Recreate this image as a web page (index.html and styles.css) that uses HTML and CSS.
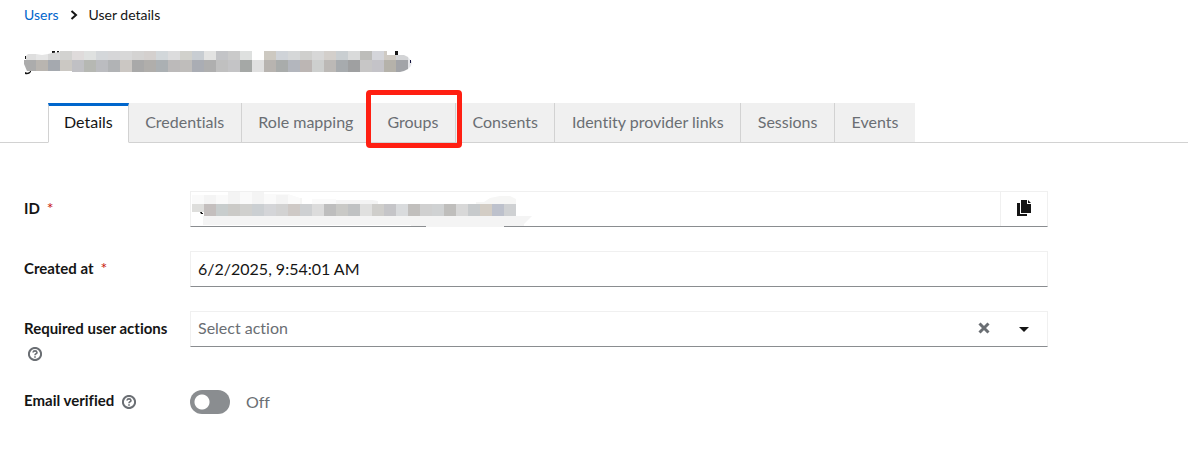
FILE: index.html
```html
<!DOCTYPE html>
<html lang="en">
<head>
<meta charset="utf-8">
<meta name="viewport" content="width=device-width, initial-scale=1">
<title>User details</title>
<link rel="stylesheet" href="styles.css">
</head>
<body>
<header class="page-header">
  <nav class="breadcrumb" aria-label="Breadcrumb">
    <a class="breadcrumb-link" href="#users">Users</a>
    <svg class="breadcrumb-chevron" viewBox="0 0 8 10" aria-hidden="true"><path d="M1.5 1 6 5 1.5 9"/></svg>
    <span>User details</span>
  </nav>
  <svg class="masked-title" viewBox="0 0 392 26" role="img" aria-label="Hidden user name">
    <path fill="#151515" d="M1 6h2v3H1zM1 22q4 2 6-2v2q-2 3-6 2zM28 1h3v3h-3zM33 1h2v3h-2zM371 1h3v6h-3z"/>
    <path fill="#dedede" d="M2 6l2-2h8v6H2z"/><path fill="#e5e5e5" d="M12 4l6 1 6-1v6H12z"/>
    <path fill="#d8d8d8" d="M24 4l4-1 8-1v8H24z"/>
    <path fill="#d2d2d0" d="M36 1h12v9H36z"/><path fill="#dfdbdb" d="M48 1h12v9H48z"/><path fill="#dfe1e0" d="M60 1h12v9H60z"/>
    <path fill="#d4d7da" d="M72 1h12v9H72z"/><path fill="#d6d6d8" d="M84 1h12v9H84z"/><path fill="#d8d8d8" d="M96 1h12v9H96z"/>
    <path fill="#d4d3d2" d="M108 1h12v9h-12z"/><path fill="#d4d0ce" d="M120 1h12v9h-12z"/><path fill="#d2d7da" d="M132 1h12v9h-12z"/>
    <path fill="#dcdcdd" d="M144 1h12v9h-12z"/><path fill="#d1d1cc" d="M156 1h12v9h-12z"/><path fill="#c8cdd2" d="M168 1h12v9h-12z"/>
    <path fill="#e3e3e2" d="M180 1h12v9h-12z"/><path fill="#c3c4c7" d="M192 1h12v9h-12z"/><path fill="#cacaca" d="M204 1h12v9h-12z"/>
    <path fill="#dee0df" d="M216 1h12v9h-12z"/><path fill="#cdc9c1" d="M240 1h12v9h-12z"/><path fill="#cfd3d8" d="M252 1h12v9h-12z"/>
    <path fill="#d5d7d8" d="M264 1h12v9h-12z"/><path fill="#cfcfcd" d="M276 1h12v9h-12z"/><path fill="#d7d7d7" d="M288 1h12v9h-12z"/>
    <path fill="#d3cfcb" d="M300 1h12v9h-12z"/><path fill="#c9ced1" d="M312 1h12v9h-12z"/><path fill="#d9dada" d="M324 1h12v9h-12z"/>
    <path fill="#bdbdba" d="M336 1h12v9h-12z"/><path fill="#d4d5da" d="M348 1h12v9h-12z"/><path fill="#cfcac3" d="M360 1h3v4h9v5h-12z"/>
    <path fill="#d3d4d6" d="M372 5h8l4 2v3h-12z"/>
    <path fill="#acacac" d="M0 10h12v11H3L0 14z"/><path fill="#b9b5b0" d="M12 10h12v11H12z"/><path fill="#a5a9af" d="M24 10h12v11H24z"/>
    <path fill="#cbc8c3" d="M36 10h12v11H36z"/><path fill="#c0c0c4" d="M48 10h12v12H48z"/><path fill="#b6b8b3" d="M60 10h12v12H60z"/>
    <path fill="#bbbcc0" d="M72 10h12v12H72z"/><path fill="#b1b3b5" d="M84 10h12v12H84z"/><path fill="#cbc7c3" d="M96 10h12v12H96z"/>
    <path fill="#a9a9a9" d="M108 10h12v12h-12z"/><path fill="#b0aeab" d="M120 10h12v12h-12z"/><path fill="#abb0b3" d="M132 10h12v12h-12z"/>
    <path fill="#bcbaba" d="M144 10h12v12h-12z"/><path fill="#bfbdbb" d="M156 10h12v12h-12z"/><path fill="#aaadb4" d="M168 10h12v12h-12z"/>
    <path fill="#afafaf" d="M180 10h12v12h-12z"/><path fill="#c0c0c0" d="M192 10h12v12h-12z"/><path fill="#c4c4c6" d="M204 10h12v12h-12z"/>
    <path fill="#a5a8a6" d="M216 10h12v12h-12z"/><path fill="#e0e0e0" d="M228 10h12v12h-12z"/><path fill="#b8b4b0" d="M240 10h12v12h-12z"/>
    <path fill="#a9acab" d="M252 10h12v12h-12z"/><path fill="#b3b6bd" d="M264 10h12v12h-12z"/><path fill="#bcb6b4" d="M276 10h12v12h-12z"/>
    <path fill="#cdcfce" d="M288 10h12v12h-12z"/><path fill="#bcb9b6" d="M300 10h12v12h-12z"/><path fill="#a7abae" d="M312 10h12v12h-12z"/>
    <path fill="#9fa0a1" d="M324 10h12v12h-12z"/><path fill="#c7c6c6" d="M336 10h12v12h-12z"/><path fill="#c4c3c8" d="M348 10h12v12h-12z"/>
    <path fill="#b5b2aa" d="M360 10h12v12h-12z"/><path fill="#a2a4a8" d="M372 10h12v9l-4 2-4 1h-4z"/><path fill="#e5e6e9" d="M384 7l4 5-1 4-3 3z"/>
    <path fill="#151540" d="M386 10h1v3h-1z"/>
  </svg>
</header>
<nav class="tabs">
  <div class="tab-list" role="tablist" aria-label="User sections">
    <button class="tab tab-current" type="button" role="tab" aria-selected="true">Details</button>
    <button class="tab" type="button" role="tab">Credentials</button>
    <button class="tab" type="button" role="tab">Role mapping</button>
    <button class="tab tab-marked" type="button" role="tab">Groups</button>
    <button class="tab" type="button" role="tab">Consents</button>
    <button class="tab" type="button" role="tab">Identity provider links</button>
    <button class="tab" type="button" role="tab">Sessions</button>
    <button class="tab" type="button" role="tab">Events</button>
  </div>
</nav>
<form class="form">
  <div class="form-row">
    <div class="form-label"><label for="user-id">ID</label><span class="required">*</span></div>
    <div class="field">
      <input class="control" id="user-id" type="text" readonly>
      <button class="copy-button" type="button" aria-label="Copy ID">
        <svg class="icon-copy" viewBox="0 0 14 16" aria-hidden="true"><path fill="#151515" d="M0 3h3v11h7v2H0zM4 0h6v4h4v9H4zM11 0l3 3h-3z"/></svg>
      </button>
      <svg class="masked-id" viewBox="0 0 344 38" aria-hidden="true">
        <path fill="#fafafa" d="M2 4h12v9H2zM26 4h12v9H26zM50 1h12v12H50zM74 3h24l12 4v6H74zM122 8h24v5h-24z"/>
        <path fill="#f4f4f4" d="M14 4h12v9H14zM38 1h12v12H38zM62 1h12v12H62zM86 4h12v9H86zM146 9h36l6 1v3h-42z"/>
        <path fill="#f6f6f5" d="M110 7h2v6h-2zM286 11h8l6-4 10-2h10l6 3v5h-40z"/>
        <path fill="#f4f4f4" d="M13 25h329l-8 8v2h-20v1h-78v-1h-15v-1H13z"/>
        <path fill="#151515" d="M10 21h2v1h1v1h-2z"/>
        <path fill="#dededc" d="M2 13h12v8H2z"/><path fill="#c4bfbe" d="M14 13h12v12H14z"/><path fill="#c8cdcd" d="M26 13h12v12H26z"/>
        <path fill="#cbcac7" d="M38 13h12v12H38z"/><path fill="#d0d0ce" d="M50 13h12v12H50z"/><path fill="#cbcfd2" d="M62 13h12v12H62z"/>
        <path fill="#d4d5d8" d="M74 13h12v12H74z"/><path fill="#d2d2d2" d="M86 13h12v12H86z"/><path fill="#cec9c6" d="M98 13h12v12H98z"/>
        <path fill="#ced0d2" d="M110 13h12v12h-12z"/><path fill="#dcdcdc" d="M122 13h12v12h-12z"/><path fill="#bebebe" d="M134 13h12v12h-12z"/>
        <path fill="#c9c9c6" d="M146 13h12v12h-12z"/><path fill="#c0c2c3" d="M158 13h12v12h-12z"/><path fill="#e0e0df" d="M170 13h12v12h-12z"/>
        <path fill="#cfcecb" d="M182 13h12v12h-12z"/><path fill="#c5c5c8" d="M194 13h12v12h-12z"/><path fill="#d9dbdd" d="M206 13h12v12h-12z"/>
        <path fill="#c1bfbd" d="M218 13h12v12h-12z"/><path fill="#d0d0d0" d="M230 13h12v12h-12z"/><path fill="#d0d2d3" d="M242 13h12v12h-12z"/>
        <path fill="#bfbebc" d="M254 13h12v12h-12z"/><path fill="#d8d8d8" d="M266 13h12v12h-12z"/><path fill="#c7cacc" d="M278 13h12v12h-12z"/>
        <path fill="#d3cdc5" d="M290 13h12v12h-12z"/><path fill="#bdc1cc" d="M302 13h12v12h-12z"/><path fill="#cfd1d3" d="M314 13h12v12h-12z"/>
      </svg>
    </div>
  </div>
  <div class="form-row">
    <div class="form-label"><label for="created-at">Created at</label><span class="required">*</span></div>
    <div class="field"><input class="control" id="created-at" type="text" value="6/2/2025, 9:54:01 AM" readonly></div>
  </div>
  <div class="form-row">
    <div class="form-label">
      <label for="actions">Required user actions</label>
      <button class="help-button" type="button" aria-label="Help for required user actions"><svg class="icon-help" viewBox="0 0 14 14" aria-hidden="true"><circle cx="7" cy="7" r="6.1"/><path d="M5 5.5Q5.2 3.9 7 3.9T9 5.5Q9 6.3 8 6.8T7 8.2M7 9.2v1.6"/></svg></button>
    </div>
    <div class="field">
      <select class="control control-select" id="actions"><option>Select action</option></select>
      <button class="clear-button" type="button" aria-label="Clear selection"><svg class="icon-clear" viewBox="0 0 12 12" aria-hidden="true"><path d="m1.5 1.5 9 9m0-9-9 9"/></svg></button>
      <svg class="icon-caret" viewBox="0 0 10 5" aria-hidden="true"><path d="M0 0h10L5 5z"/></svg>
    </div>
  </div>
  <div class="form-row form-row-switch">
    <div class="form-label">
      <label for="email-verified">Email verified</label>
      <button class="help-button" type="button" aria-label="Help for email verified"><svg class="icon-help" viewBox="0 0 14 14" aria-hidden="true"><circle cx="7" cy="7" r="6.1"/><path d="M5 5.5Q5.2 3.9 7 3.9T9 5.5Q9 6.3 8 6.8T7 8.2M7 9.2v1.6"/></svg></button>
    </div>
    <div class="switch-field">
      <input class="switch" id="email-verified" type="checkbox" role="switch">
      <span>Off</span>
    </div>
  </div>
</form>
</body>
</html>
```

FILE: styles.css
```css
* { box-sizing: border-box; }
body {
  margin: 0;
  background: #fff;
  color: #151515;
  font-family: Lato, "Open Sans", sans-serif;
  font-size: 16px;
  line-height: 24px;
  font-variant-ligatures: none;
}
button, input, select { font: inherit; color: inherit; font-variant-ligatures: none; }
button { cursor: pointer; }

.page-header { padding: 5px 24px 27px; }
.breadcrumb {
  display: flex;
  align-items: center;
  gap: 11px;
  font-size: 14px;
  line-height: 20px;
}
.breadcrumb-link { color: #06c; text-decoration: none; }
.breadcrumb-chevron { width: 8px; height: 10px; fill: none; stroke: #151515; stroke-width: 2; }
.masked-title { display: block; width: 392px; height: 26px; margin-top: 25px; }

.tabs { padding-left: 48px; border-bottom: 1px solid #d2d2d2; }
.tab-list { display: flex; max-width: 867px; margin-bottom: -1px; }
.tab {
  position: relative;
  flex: 1 0 auto;
  padding: 7px 16px 8px;
  border: 0;
  border-right: 1px solid #d2d2d2;
  border-bottom: 1px solid #d2d2d2;
  background: #f0f0f0;
  color: #6a6e73;
  white-space: nowrap;
}
.tab:last-child { border-right: 0; }
.tab-current {
  flex-grow: 0;
  padding: 4px 15px 8px;
  border-top: 3px solid #06c;
  border-left: 1px solid #d2d2d2;
  border-bottom-color: #fff;
  background: #fff;
  color: #151515;
}
.tab-marked::after {
  content: "";
  position: absolute;
  z-index: 1;
  inset: -13px -7px -6px -5px;
  border: 5px solid #ff1f12;
  border-radius: 4px;
}

.form {
  display: flex;
  flex-direction: column;
  gap: 24px;
  max-width: 1072px;
  padding: 48px 24px;
}
.form-row { display: grid; grid-template-columns: 150px minmax(0, 1fr); gap: 16px; }
.form-label { padding-top: 5px; font-size: 15px; font-weight: 700; }
.form-label label { white-space: nowrap; }
.required { margin-left: 7px; color: #c9190b; font-size: 16px; font-weight: 400; }
.field {
  position: relative;
  display: flex;
  align-items: center;
  align-self: start;
  height: 36px;
  border: 1px solid #f0f0f0;
  border-bottom-color: #8a8d90;
}
.control {
  flex: 1;
  min-width: 0;
  height: 34px;
  padding: 0 7px 2px;
  border: 0;
  border-radius: 0;
  background: transparent;
  outline: 0;
}
.control-select { appearance: none; color: #6a6e73; }
.copy-button {
  display: grid;
  place-items: center;
  width: 47px;
  height: 34px;
  padding: 0 0 2px;
  border: 0;
  border-left: 1px solid #f0f0f0;
  background: none;
}
.icon-copy { width: 14px; height: 16px; }
.masked-id { position: absolute; top: -1px; left: -1px; width: 344px; height: 38px; }
.clear-button { display: grid; place-items: center; width: 28px; height: 34px; padding: 0 0 2px; border: 0; background: none; }
.icon-clear { width: 12px; height: 12px; stroke: #6a6e73; stroke-width: 3; }
.icon-caret { width: 10px; height: 5px; margin: 0 18px 0 21px; fill: #151515; }
.help-button { display: inline-block; padding: 0 4px; border: 0; background: none; vertical-align: -3px; }
.icon-help { display: block; width: 14px; height: 14px; fill: none; stroke: #6a6e73; stroke-width: 2; }
.icon-help path { stroke-width: 1.6; }
.form-row-switch .form-label { padding-top: 0; }
.switch-field { display: flex; align-items: center; gap: 16px; padding-top: 2px; color: #6a6e73; }
.switch {
  appearance: none;
  width: 40px;
  height: 24px;
  margin: 0;
  border-radius: 12px;
  background: radial-gradient(circle at 12px 12px, #fff 7px, #8a8d90 8px);
}
```
